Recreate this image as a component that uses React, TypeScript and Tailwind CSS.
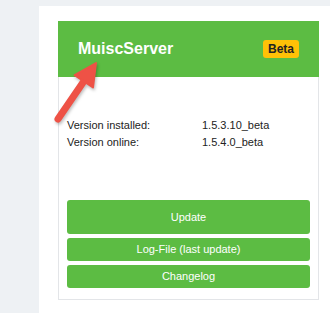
function Arrow() {
  return (
    <svg
      className="pointer-events-none absolute left-0 top-0"
      width="330"
      height="313"
      viewBox="0 0 330 313"
      style={{ filter: "drop-shadow(1px 2px 1.5px rgba(0,0,0,0.25))" }}
    >
      <line x1="58" y1="119" x2="84" y2="81" stroke="#ee5246" strokeWidth="7" strokeLinecap="round" />
      <polygon points="96,63 93,87.4 74.7,75.2" fill="#ee5246" stroke="#ee5246" strokeWidth="2" strokeLinejoin="round" />
    </svg>
  );
}

export default function App() {
  return (
    <div
      className="relative h-[313px] w-[330px] overflow-hidden bg-[#eef1f4] pl-[39px] pt-[6px]"
      style={{ fontFamily: '"Liberation Sans", Arial, sans-serif' }}
    >
      <div className="h-full w-[300px] bg-white pl-[19px] pt-[15px]">
        <div className="flex h-[279px] w-[261px] flex-col border border-[#e3e5e8] bg-white">
          <div className="-mx-px -mt-px flex h-[56px] items-center justify-between bg-[#5cbc43] pl-[20px] pr-[20px]">
            <span className="text-[16px] font-bold text-white">MuiscServer</span>
            <span className="rounded-[3px] bg-[#ffc107] px-[5px] py-[1px] text-[12px] font-bold leading-[16px] text-[#222]">
              Beta
            </span>
          </div>
          <div className="flex flex-1 flex-col px-[8px] pt-[40px] text-[11px] leading-[17px] text-[#222]">
            <div className="flex">
              <span className="w-[135px]">Version installed:</span>
              <span>1.5.3.10_beta</span>
            </div>
            <div className="flex">
              <span className="w-[135px]">Version online:</span>
              <span>1.5.4.0_beta</span>
            </div>
            <div className="mt-auto flex flex-col gap-[4px] pb-[11px] text-white">
              <button className="h-[34px] rounded-[3px] bg-[#5cbc43] text-[11px]">Update</button>
              <button className="h-[23px] rounded-[3px] bg-[#5cbc43] text-[11px]">Log-File (last update)</button>
              <button className="h-[23px] rounded-[3px] bg-[#5cbc43] text-[11px]">Changelog</button>
            </div>
          </div>
        </div>
      </div>
      <Arrow />
    </div>
  );
}
